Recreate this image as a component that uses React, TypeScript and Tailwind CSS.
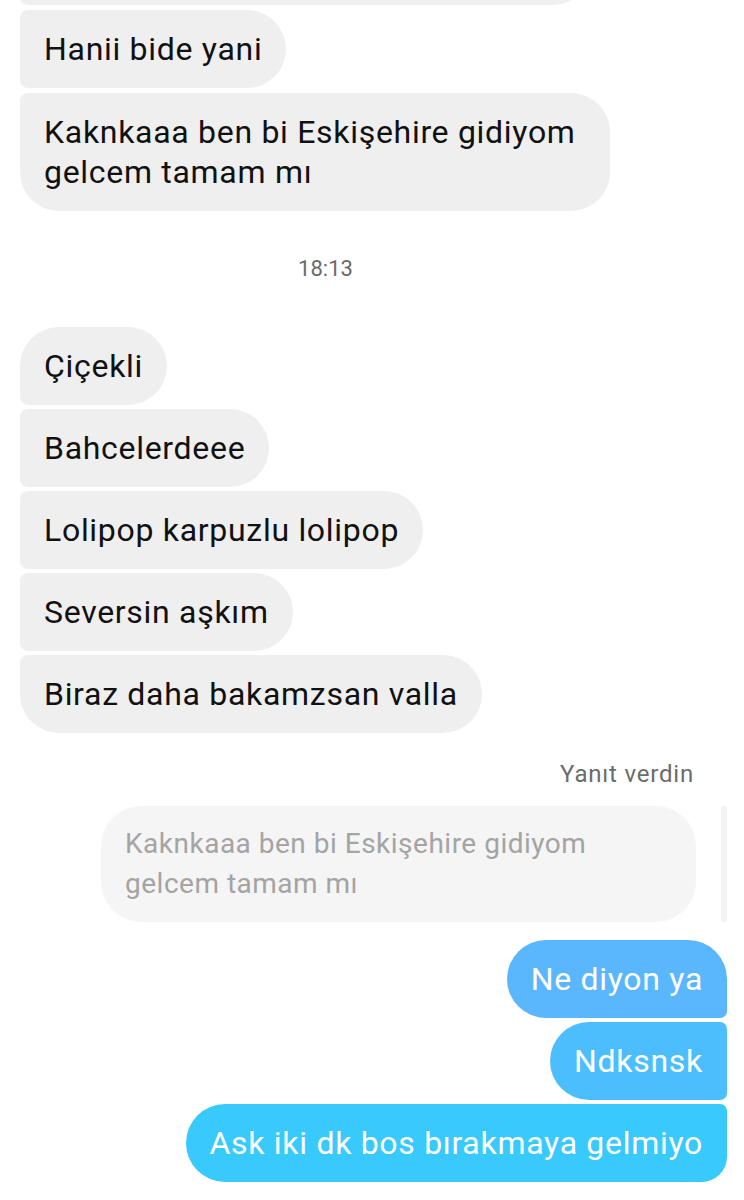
import React from "react";

const font = { fontFamily: "Roboto, 'Noto Sans', sans-serif" };

function In({ children, tl = "rounded-tl-[8px]", bl = "rounded-bl-[8px]" }: { children?: React.ReactNode; tl?: string; bl?: string }) {
  return (
    <div className="flex">
      <div
        className={`bg-[#efefef] text-[#111111] text-[32px] tracking-[0.7px] leading-[40px] px-6 py-[19px] rounded-r-[39px] max-w-[590px] ${tl} ${bl}`}
      >
        {children}
      </div>
    </div>
  );
}

function Out({ children, color, tr, br }: { children: React.ReactNode; color: string; tr: string; br: string }) {
  return (
    <div className="flex justify-end">
      <div className={`${color} text-white text-[32px] tracking-[0.7px] leading-[40px] px-6 py-[19px] rounded-l-[40px] ${tr} ${br}`}>
        {children}
      </div>
    </div>
  );
}

export default function App() {
  return (
    <div className="w-[744px] h-[1200px] bg-white overflow-hidden" style={font}>
      <div className="flex flex-col pl-5 pr-[17px]">
        <div className="flex mt-[-73px]">
          <div className="bg-[#efefef] w-[572px] h-[78px] rounded-r-[39px] rounded-l-[8px]" />
        </div>
        <div className="flex flex-col gap-[5px] mt-[5px]">
          <In>Hanii bide yani</In>
          <In bl="rounded-bl-[39px]">
            Kaknkaaa ben bi Eskişehire gidiyom gelcem tamam mı
          </In>
        </div>
        <div className="mt-[46px] text-center text-[22px] leading-[24px] text-[#6a6a6a] pr-[96px]">18:13</div>
        <div className="flex flex-col gap-[4px] mt-[46px]">
          <In tl="rounded-tl-[39px]">Çiçekli</In>
          <In>Bahcelerdeee</In>
          <In>Lolipop karpuzlu lolipop</In>
          <In>Seversin aşkım</In>
          <In bl="rounded-bl-[39px]">Biraz daha bakamzsan valla</In>
        </div>
        <div className="mt-[28px] text-right pr-[33px] text-[24px] tracking-[0.8px] leading-[26px] text-[#6b6b6b]">Yanıt verdin</div>
        <div className="flex justify-end items-stretch mt-[19px]">
          <div className="bg-[#f5f5f5] text-[#a4a4a4] text-[28px] tracking-[0.5px] leading-[40px] px-6 py-[18px] rounded-[40px] w-[595px]">
            Kaknkaaa ben bi Eskişehire gidiyom
            <br />
            gelcem tamam mı
          </div>
          <div className="w-[6px] ml-[25px] bg-[#f3f3f5] rounded-full" />
        </div>
        <div className="flex flex-col gap-[4px] mt-[18px]">
          <Out color="bg-[#5bb7fd]" tr="rounded-tr-[40px]" br="rounded-br-[7px]">Ne diyon ya</Out>
          <Out color="bg-[#4cbefd]" tr="rounded-tr-[7px]" br="rounded-br-[7px]">Ndksnsk</Out>
          <Out color="bg-[#38c9fd]" tr="rounded-tr-[7px]" br="rounded-br-[26px]">Ask iki dk bos bırakmaya gelmiyo</Out>
        </div>
      </div>
    </div>
  );
}
